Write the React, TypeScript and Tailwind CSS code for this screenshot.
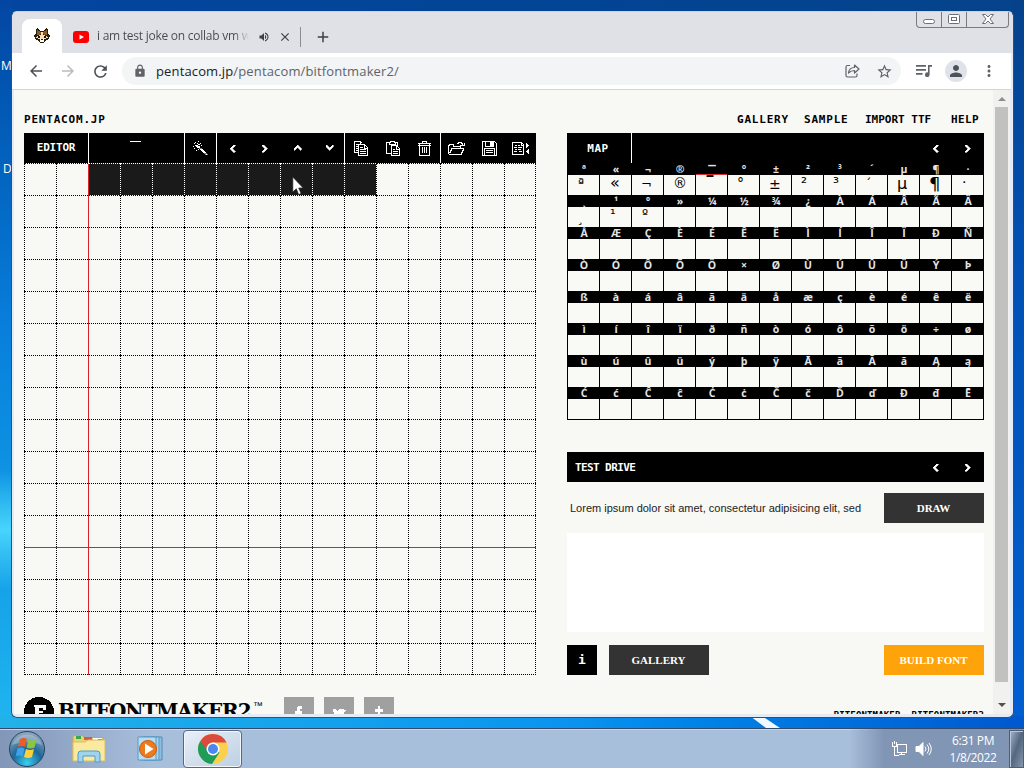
import type { ReactNode } from 'react'
import clsx from 'clsx'
import { MdArrowBack, MdArrowForward, MdRefresh, MdLock, MdStarBorder, MdPerson, MdMoreVert, MdVolumeUp, MdClose, MdAdd } from 'react-icons/md'

const LABELS = [
  'ª«¬®¯°±²³´µ¶·',
  '¸¹º»¼½¾¿ÀÁÂÃÄ',
  'ÅÆÇÈÉÊËÌÍÎÏÐÑ',
  'ÒÓÔÕÖ×ØÙÚÛÜÝÞ',
  'ßàáâãäåæçèéêë',
  'ìíîïðñòóôõö÷ø',
  'ùúûüýþÿĀāĂăĄą',
  'ĆćĈĉĊċČčĎďĐđĒ',
]

// Glyphs drawn so far, keyed by "row-col". The nudge places each one in its cell.
const GLYPHS: Record<string, { ch: string; cls: string }> = {
  '0-0': { ch: 'ª', cls: 'text-[13px] left-[10px] -top-[2px]' },
  '0-1': { ch: '«', cls: 'text-[16px] left-[10px] -top-[2px]' },
  '0-2': { ch: '¬', cls: 'text-[13px] left-[9px] -top-px' },
  '0-3': { ch: '®', cls: 'text-[14px] left-[9px] -top-[2px]' },
  '0-4': { ch: '¯', cls: 'text-[24px] left-[8px] top-px' },
  '0-5': { ch: '°', cls: 'text-[14px] left-[9px] -top-[2px]' },
  '0-6': { ch: '±', cls: 'text-[14px] left-[9px] -top-px' },
  '0-7': { ch: '²', cls: 'text-[15px] left-[9px] -top-[2px]' },
  '0-8': { ch: '³', cls: 'text-[15px] left-[9px] -top-[2px]' },
  '0-9': { ch: '´', cls: 'text-[13px] left-[9px] -top-px' },
  '0-10': { ch: 'µ', cls: 'text-[16px] left-[9px] -top-[1px]' },
  '0-11': { ch: '¶', cls: 'text-[18px] left-[9px] -top-[1px]' },
  '0-12': { ch: '·', cls: 'text-[14px] left-[10px] -top-[3px]' },
  '1-0': { ch: '¸', cls: 'text-[13px] left-[9px] top-px' },
  '1-1': { ch: '¹', cls: 'text-[14px] left-[10px] -top-[3px]' },
  '1-2': { ch: 'º', cls: 'text-[13px] left-[10px] -top-[3px]' },
}

const PIXEL = "font-['DejaVu_Sans_Mono',monospace] font-bold whitespace-nowrap"

function Svg({ w, h, d, children, className }: { w: number; h: number; d?: string; children?: ReactNode; className?: string }) {
  return (
    <svg
      width={w}
      height={h}
      viewBox={`0 0 ${w} ${h}`}
      fill="none"
      stroke="currentColor"
      shapeRendering="crispEdges"
      className={clsx('shrink-0', className)}
    >
      {d && <path d={d} />}
      {children}
    </svg>
  )
}

const ARROWS = {
  left: 'M4 0h2v1h-1v1h-1v1h-1v1h1v1h1v1h1v1h-2v-1h-1v-1h-1v-1h-1v-1h1v-1h1v-1h1z',
  right: 'M0 0h2v1h1v1h1v1h1v1h-1v1h-1v1h-1v1h-2v-1h1v-1h1v-1h1v-1h-1v-1h-1v-1h-1z',
  up: 'M3 0h1v1h1v1h1v1h1v2h-1v-1h-1v-1h-1v-1h-1v1h-1v1h-1v1h-1v-2h1v-1h1v-1h1z',
  down: 'M0 0h1v1h1v1h1v1h1v-1h1v-1h1v-1h1v2h-1v1h-1v1h-1v1h-1v-1h-1v-1h-1v-1h-1z',
}

function Arrow({ dir, className }: { dir: keyof typeof ARROWS; className?: string }) {
  return (
    <svg
      width="7"
      height="7"
      viewBox="0 0 7 7"
      fill="currentColor"
      stroke="currentColor"
      strokeWidth=".6"
      shapeRendering="crispEdges"
      className={clsx('overflow-visible', className)}
    >
      <path d={ARROWS[dir]} />
    </svg>
  )
}

function Tool({ children, end }: { children: ReactNode; end?: boolean }) {
  return (
    <div className={clsx('flex h-[30px] w-8 shrink-0 items-center justify-center', end && 'border-r border-white')}>
      {children}
    </div>
  )
}

function EditorBar() {
  return (
    <div className="flex h-[30px] w-[512px] bg-black text-white">
      <div className={clsx(PIXEL, 'flex w-[65px] shrink-0 items-center justify-center border-r border-white pt-px text-[11px] tracking-[-0.2px]')}>
        EDITOR
      </div>
      <div className="flex w-24 shrink-0 justify-center border-r border-white pt-2">
        <div className="mr-0.5 h-px w-[11px] bg-white" />
      </div>
      <Tool end>
        <Svg w={15} h={15}>
          <path d="M7.5 7.5l5 5M6.5 7.5l5 5M8.5 7.5l5 5M12.5 13.5h2" shapeRendering="auto" strokeWidth="1" />
          <path d="M5 0.5h1M1 2.5h1M4 2.5h1M7 2.5h1M2 1.5h1M2 4.5h2M5 3.5h2M4 4.5h1M0 5.5h1M3 5.5h4M8 4.5h1M1 7.5h1M4 6.5h3M5 8.5h1M3 9.5h1" />
        </Svg>
      </Tool>
      <Tool><Arrow dir="left" className="mr-0.5" /></Tool>
      <Tool><Arrow dir="right" /></Tool>
      <Tool><Arrow dir="up" /></Tool>
      <Tool end><Arrow dir="down" className="ml-0.5" /></Tool>
      <Tool>
        <Svg w={15} h={15} d="M4.5 11.5h-4v-11h6l2 2M6 1v2M2 3.5h2M2 5.5h2M2 7.5h2M2 9.5h2M4.5 3.5h6l3 3v8h-9zM10.5 4v3h3M6 6.5h3M6 8.5h6M6 10.5h6M6 12.5h6" />
      </Tool>
      <Tool>
        <Svg w={15} h={15} d="M5.5 12.5h-5v-11h3M9 1.5h2.500v3M3.500 3.500v-2h1v-1h4v1h1v2zM5.500 4.500h5l3 3v7h-8zM10.500 5v3h3M7 8.500h2M7 10.500h5M7 12.500h5" />
      </Tool>
      <Tool end>
        <Svg w={13} h={15} d="M4.5 2v-1.5h4v1.5M0 2.5h13M0 4.5h13M1.5 3v11.5h10v-11.5M4.5 6v6M6.5 6v6M8.5 6v6" />
      </Tool>
      <Tool>
        <Svg w={17} h={15} className="mr-0.5" d="M0.5 13v-8.5h1v-1h4v2h7v2M1 13.5h12M1.5 12v-1h1v-2h1v-1.500h12v2h-1v2h-1v2M9 2.500h1v-1h3v1h1v2M12 4.500h4v-3" />
      </Tool>
      <Tool>
        <Svg w={15} h={15} d="M0.500 0.500h12l2 2v12h-14zM3.500 1v4h8v-4M2.500 14v-6.500h10v6.500">
          <path d="M8 1h3v4h-3z" fill="currentColor" stroke="none" />
          <path d="M4 9.500h7M4 11.500h7" />
        </Svg>
      </Tool>
      <Tool>
        <Svg w={18} h={13} d="M0.500 0.500h9l2 2v10h-11zM9.500 1v2h2M3 3.500h2M6 3.500h2M2 5.500h3M6 5.500h4M3 7.500h2M6 7.500h3M2 9.500h3M7 9.500h3">
          <path d="M14 1h1v1h1v1h1v1h-1v1h-1v1h-1zM17 7v5h-1v-1h-1v-1h-1v-1h1v-1h1v-1z" fill="currentColor" stroke="none" />
        </Svg>
      </Tool>
    </div>
  )
}

function PixelGrid() {
  return (
    <div className="relative grid h-[512px] w-[512px] grid-cols-[repeat(16,32px)] grid-rows-[repeat(16,32px)] border-r border-b border-dotted border-black">
      {Array.from({ length: 256 }, (_, i) => {
        const row = Math.floor(i / 16)
        const col = i % 16
        const on = row === 0 && col >= 2 && col <= 10
        return (
          <div
            key={i}
            className={clsx('border-t border-l border-dotted', on ? 'border-white bg-[#1a1a1a]' : 'border-black')}
          />
        )
      })}
      {/* left bearing and baseline guides */}
      <div className="absolute top-px left-16 z-10 h-[511px] w-px bg-[#d82428]" />
      <div className="absolute top-[384px] left-0 z-10 h-px w-[512px] bg-[#dc2030]" />
    </div>
  )
}

function GlyphMap() {
  return (
    <div className="w-[417px] bg-black pb-px">
      <div className="flex h-[30px] text-white">
        <div className={clsx(PIXEL, 'flex w-[65px] items-center justify-center border-r border-white pt-0.5 pr-0.5 text-[11px] tracking-[0.5px]')}>MAP</div>
        <div className="ml-auto flex">
          <Tool><Arrow dir="left" className="mr-0.5" /></Tool>
          <Tool><Arrow dir="right" /></Tool>
        </div>
      </div>
      {LABELS.map((row, r) => (
        <div key={r} className="flex h-8 gap-px pl-px">
          {Array.from(row).map((ch, c) => {
            const g = GLYPHS[`${r}-${c}`]
            return (
              <div key={c} className="flex w-[31px] flex-col">
                <div
                  className={clsx(
                    "flex h-3 items-center justify-center pl-px font-['Open_Sans','Noto_Sans',sans-serif] leading-3 font-bold text-[#e4e4e4]",
                    ch === '¯' ? 'pt-1 text-[15px]' : 'text-[10.5px]',
                  )}
                >
                  {ch}
                </div>
                <div className="relative h-5 bg-[#f9f9f5]">
                  {r === 0 && c === 4 && <div className="absolute -top-px left-0 h-px w-full bg-[#d83030]" />}
                  {g && (
                    <span className={clsx("absolute font-['DejaVu_Sans','Liberation_Sans',sans-serif] leading-5 text-black", g.cls)}>{g.ch}</span>
                  )}
                </div>
              </div>
            )
          })}
        </div>
      ))}
    </div>
  )
}

const SERIF_BTN = "flex h-[30px] w-[100px] items-center justify-center pr-px font-['Liberation_Serif',serif] text-[11px] font-bold text-white"

function TestDrive() {
  return (
    <div className="mt-8 w-[417px]">
      <div className="flex h-[30px] items-center bg-black pl-2 text-white">
        <span className={clsx(PIXEL, 'pt-0.5 text-[11px] tracking-[-0.6px]')}>TEST DRIVE</span>
        <div className="ml-auto flex">
          <Tool><Arrow dir="left" className="mr-0.5" /></Tool>
          <Tool><Arrow dir="right" /></Tool>
        </div>
      </div>
      <div className="mt-[11px] flex items-center">
        <span className="pl-[3px] font-['Liberation_Sans',sans-serif] text-[11px] whitespace-nowrap text-[#222]">
          Lorem ipsum dolor sit amet, consectetur adipisicing elit, sed
        </span>
        <div className={clsx(SERIF_BTN, 'ml-auto bg-[#333]')}>DRAW</div>
      </div>
      <div className="mt-[10px] h-[99px] bg-white" />
      <div className="mt-[13px] flex">
        <div className={clsx(PIXEL, 'flex size-[30px] items-center justify-center bg-black text-[13px] text-white')}>i</div>
        <div className={clsx(SERIF_BTN, 'ml-3 bg-[#333]')}>GALLERY</div>
        <div className={clsx(SERIF_BTN, 'ml-auto bg-[#fea30a]')}>BUILD FONT</div>
      </div>
    </div>
  )
}

function Social({ children }: { children: ReactNode }) {
  return (
    <div className="flex size-[30px] justify-center bg-[#a0a0a0] pt-2 text-white">
      {children}
    </div>
  )
}

function Footer() {
  return (
    <div className="mt-[22px] flex">
      <svg width="30" height="30" viewBox="0 0 30 30" shapeRendering="crispEdges">
        <circle cx="15" cy="15" r="15" />
        <path d="M10 8h12v5h-3v-2h-4v3h4v2h-4v6h-5v-2h1v-10h-1z" fill="#f8f8f4" />
      </svg>
      <div className="mt-px ml-1 w-[192px] font-['DejaVu_Serif',serif] text-[20px] leading-[26px] font-bold tracking-[-1.1px] whitespace-nowrap">
        BITFONTMAKER2
      </div>
      <span className="mt-1 ml-[3px] w-[10px] font-['Liberation_Sans',sans-serif] text-[10px] leading-[9px]">™</span>
      <div className="ml-[21px] flex gap-[10px]">
        <Social>
          <svg width="10" height="16" viewBox="0 0 10 16" fill="currentColor" shapeRendering="crispEdges"><path d="M4 1h4v3h-2v2h2v3h-2v6h-3v-6h-2v-3h2v-4z" /></svg>
        </Social>
        <Social>
          <svg width="14" height="14" viewBox="0 0 14 14" fill="currentColor" shapeRendering="crispEdges"><path d="M1 4h2l3 3v-2l2-1h3l1 1h2l-2 2v3l-3 3h-6l-2-2h3l-2-2v-1l-1-2z" /></svg>
        </Social>
        <Social>
          <svg width="10" height="16" viewBox="0 0 10 16" fill="currentColor" shapeRendering="crispEdges"><path d="M4 1h2v3h3v3h-3v5h3v3h-5v-8h-3v-3h3z" /></svg>
        </Social>
      </div>
      <div className={clsx(PIXEL, 'mt-[12px] ml-auto text-[9px] leading-3 tracking-[0.15px]')}>BITFONTMAKER, BITFONTMAKER2</div>
    </div>
  )
}

function Site() {
  return (
    <div className="h-[624px] w-[979px] overflow-hidden bg-[#f8f8f4] pr-[9px] pl-[10px] text-black">
      <div className={clsx(PIXEL, 'flex h-[43px] items-end pb-[6px] text-[11px] leading-[14px] tracking-[0.8px]')}>
        <span>PENTACOM.JP</span>
        <div className="ml-auto flex pr-[5px]">
          <span className="w-[67px]">GALLERY</span>
          <span className="w-[61px]">SAMPLE</span>
          <span className="w-[86px] tracking-[0px]">IMPORT TTF</span>
          <span className="w-7 tracking-[0.4px]">HELP</span>
        </div>
      </div>
      <div className="flex gap-[31px]">
        <div>
          <EditorBar />
          <PixelGrid />
        </div>
        <div>
          <GlyphMap />
          <TestDrive />
        </div>
      </div>
      <Footer />
    </div>
  )
}

function TitleBar() {
  return (
    <div className="flex h-[41px] bg-[#dfe1e6] pl-[10px]">
      <div className="mt-[7px] flex h-[34px] w-10 items-center justify-center rounded-t-lg bg-white">
        <svg width="16" height="16" viewBox="0 0 16 16" shapeRendering="crispEdges">
          <path d="M3 0h1v1h1v1h1v1h4v-1h1v-1h1v-1h1v1h1v5h1v1h1v2h-1v2h-1v1h-2v1h-1v1h-1v1h-4v-1h-1v-1h-1v-1h-2v-1h-1v-2h-1v-2h1v-1h1v-5h1z" fill="#2a1c0c" />
          <path d="M3 2h1v1h2v1h1v2h-1v1h-3zM13 2h-1v1h-2v1h-1v2h1v1h3z" fill="#8a5c2c" />
          <path d="M7 4h2v3h2v1h2v1h1v1h-2v1h-2v1h-4v-1h-2v-1h-2v-1h1v-1h2v-1h2z" fill="#f4e2b4" />
          <path d="M4 8h2v2h-2zM10 8h2v2h-2z" fill="#181008" />
          <path d="M6 11h4v3h-4z" fill="#fff" />
          <path d="M7 11h2v1h-2z" fill="#222" />
        </svg>
      </div>
      <div className="flex h-[34px] items-center pt-4 pl-[11px]">
        <svg width="16" height="12" viewBox="0 0 16 12">
          <rect width="16" height="12" rx="3" fill="#f00" />
          <path d="M6.500 3.500l4.500 2.500l-4.500 2.500z" fill="#fff" />
        </svg>
        <div className="mb-0.5 ml-2 w-[152px] bg-linear-to-r from-[#45494d] from-90% to-[#dfe1e6] bg-clip-text font-['Open_Sans',sans-serif] text-[12px] tracking-[-0.25px] whitespace-nowrap text-transparent">
          i am test joke on collab vm w
        </div>
        <MdVolumeUp className="ml-[9px] size-3 text-[#3c4043]" />
        <MdClose className="ml-2 size-[14px] text-[#3c4043]" />
        <div className="ml-2 h-5 w-px bg-[#8a8d92]" />
        <MdAdd className="ml-[13px] size-[18px] text-[#3c4043]" />
      </div>
      <div className="mr-1 ml-auto flex h-4 w-[93px] rounded-b border border-t-0 border-[#777b84] text-[#6a6e78]">
        <div className="flex w-[25px] items-center justify-center border-r border-[#777b84] pt-1">
          <div className="h-[5px] w-3 rounded-sm border border-[#6a6e78] bg-white" />
        </div>
        <div className="flex w-[25px] items-center justify-center border-r border-[#777b84] pb-0.5">
          <svg width="12" height="10" viewBox="0 0 12 10" fill="none" stroke="currentColor"><rect x=".5" y=".5" width="11" height="9" rx="1" fill="#fff" /><rect x="3.500" y="3.500" width="5" height="3" /></svg>
        </div>
        <div className="flex flex-1 items-center justify-center pb-0.5">
          <svg width="12" height="10" viewBox="0 0 12 10" fill="#fff" stroke="currentColor"><path d="M.5.5h3l2.500 2.500l2.500-2.500h3l-3.500 4.500l3.500 4.500h-3l-2.500-2.500l-2.500 2.500h-3l3.500-4.500z" /></svg>
        </div>
      </div>
    </div>
  )
}

function Toolbar() {
  return (
    <div className="flex h-[37px] items-center border-b border-[#d5d6d9] bg-white text-[#5f6368]">
      <MdArrowBack className="ml-[15px] size-[18px] text-[#4c5054]" />
      <MdArrowForward className="ml-[14px] size-[18px] text-[#b9bbbe]" />
      <MdRefresh className="ml-[14px] size-[19px] text-[#4c5054]" />
      <div className="ml-3 flex h-7 w-[779px] items-center rounded-full bg-[#f2f4f5]">
        <MdLock className="ml-[11px] size-[14px]" />
        <span className="mt-px ml-[9px] font-['Open_Sans',sans-serif] text-[13px] tracking-[0.14px] whitespace-nowrap">
          <span className="text-[#202124]">pentacom.jp</span>/pentacom/bitfontmaker2/
        </span>
        <svg className="mr-[16px] ml-auto" width="15" height="14" viewBox="0 0 15 14" fill="none" stroke="currentColor" strokeWidth="1.200">
          <path d="M5 1.500h-2.500q-1.500 0-1.500 1.500v8.500q0 1.500 1.500 1.500h8q1.500 0 1.500-1.500v-2" />
          <path d="M3.500 9q.5-5.500 6-5.500v-2.500l4.500 4l-4.500 4v-2.500q-3.500 0-6 2.500z" strokeLinejoin="round" />
        </svg>
        <MdStarBorder className="mr-[8px] size-[17px]" />
      </div>
      <svg className="ml-[15px]" width="17" height="14" viewBox="0 0 17 14" fill="currentColor">
        <path d="M0 1h10v1.700h-10zM0 5h10v1.700h-10zM0 9h6.500v1.700h-6.500zM12 1h4v1.700h-2.400v8a2.300 2.300 0 1 1-1.600-2.200z" />
      </svg>
      <div className="ml-[12px] flex size-[22px] items-center justify-center rounded-full bg-[#dfe2e8]">
        <MdPerson className="size-[18px] text-[#4c515a]" />
      </div>
      <MdMoreVert className="ml-[13px] size-[18px]" />
    </div>
  )
}

function BrowserWindow() {
  return (
    <div className="absolute top-[11px] left-[11px] h-[707px] w-[1003px] overflow-hidden rounded-md border border-[#34506e] border-t-[#c8d4e4] bg-[#e6eaf4]">
      <TitleBar />
      <div className="mr-[2px]">
        <Toolbar />
      </div>
      <div className="ml-[2px] flex">
        <Site />
        <div className="flex h-[624px] w-[17px] flex-col items-center bg-[#f1f1f0]">
          <div className="mt-[7px] size-0 border-x-4 border-b-4 border-transparent border-b-[#8e8e8e]" />
          <div className="mt-[6px] mr-[1px] h-[575px] w-[13px] bg-[#c1c1c0]" />
          <div className="mt-[21px] size-0 border-x-4 border-t-4 border-transparent border-t-[#505050]" />
        </div>
      </div>
    </div>
  )
}

function Taskbar() {
  return (
    <div className="flex h-10 items-center border-t border-[#324b6c] bg-linear-to-r from-[#8296b8] from-0% via-[#a8bfdc] via-15% to-[#a8bfdc] shadow-[inset_0_1px_0_#c6d6e8]">
      <svg className="ml-[8px]" width="38" height="38" viewBox="0 0 38 38">
        <defs>
          <radialGradient id="orb" cx=".5" cy=".9" r=".85">
            <stop offset="0" stopColor="#38d0f0" />
            <stop offset=".5" stopColor="#1c6798" />
            <stop offset="1" stopColor="#8ba6bd" />
          </radialGradient>
        </defs>
        <circle cx="19" cy="19" r="17.500" fill="url(#orb)" stroke="#24425e" />
        <path d="M4 15a15.500 14 0 0 1 30 0q-15-6-30 0" fill="#fff" opacity=".25" />
        <path d="M12 9q4-2 7 0l-2 8q-4-2-7 0z" fill="#ef5a28" />
        <path d="M20.500 9.500q4 2 8 0l-2 8q-4 2-8 0z" fill="#8cc63e" />
        <path d="M9.500 18.500q4-2 7 0l-2 8q-4-2-7 0z" fill="#3da1ec" />
        <path d="M18 19q4 2 8 0l-2 8q-4 2-8 0z" fill="#fdd03b" />
      </svg>
      <svg className="ml-[26px]" width="34" height="30" viewBox="0 0 34 30">
        <path d="M1 3q0-1.500 1.500-1.500h8l1.500 2h19v23h-30z" fill="#ecd271" stroke="#c9a84a" />
        <path d="M4 2h5v3h-5z" fill="#36a852" />
        <path d="M12 3h8v3h-8z" fill="#d95b3c" />
        <path d="M21 4h9v3h-9z" fill="#fff" />
        <path d="M26 5h4v2h-4z" fill="#3f87c8" />
        <path d="M1 8h12l3-2h17v21h-32z" fill="#fae99f" stroke="#d8be66" />
        <path d="M6 28v-8q0-3 3-3h16q3 0 3 3v8h-5v-6h-12v6z" fill="#9fd4f0" stroke="#4c9cc8" />
      </svg>
      <svg className="ml-[31px]" width="30" height="28" viewBox="0 0 30 28">
        <path d="M7 2h18v23h-18z" fill="#92bede" stroke="#4b8db8" />
        <path d="M4 2h18v23h-18z" fill="#a9d2ea" stroke="#5899c4" />
        <path d="M1 2h18v23h-18z" fill="#b9dcf0" stroke="#5899c4" />
        <circle cx="11" cy="14" r="8.500" fill="#ee7a1e" stroke="#c85c10" />
        <path d="M8 8.500l8.500 5.500l-8.500 5.500z" fill="#fff" />
      </svg>
      <div className="ml-[16px] flex h-[38px] w-[59px] items-center justify-center rounded-sm border border-[#53698a] bg-linear-to-br from-[#e9eff6] to-[#bccfe3] shadow-[inset_0_0_0_1px_#f2f7fb]">
        <svg width="30" height="30" viewBox="0 0 30 30">
          <circle cx="15" cy="15" r="15" fill="#fdd04b" />
          <path d="M15 15L2 7.500A15 15 0 0 0 14 30l7.500-11.500z" fill="#1e9c58" />
          <path d="M2 7.500A15 15 0 0 1 28.500 8.500H15a6.500 6.500 0 0 0-6.500 6.500z" fill="#dc4a3d" />
          <circle cx="15" cy="15" r="6.500" fill="#fff" />
          <circle cx="15" cy="15" r="5" fill="#4a88ee" />
        </svg>
      </div>
      <div className="ml-auto flex h-[39px] w-[175px] items-center bg-linear-to-r from-transparent to-[#8096b4] to-20%">
        <svg className="ml-[42px]" width="17" height="16" viewBox="0 0 17 16" fill="none" stroke="#fff" shapeRendering="crispEdges">
          <path d="M1.500 1v4.500h4v-4.500M3.500 0v3M3.500 6v8.500h4M6.500 3.500h9v8h-9zM8 13.500h6M10 12v2" />
        </svg>
        <svg className="ml-[7px]" width="17" height="16" viewBox="0 0 17 16" fill="none" stroke="#fff">
          <path d="M1 5.500h3l4-4v13l-4-4h-3z" fill="#fff" />
          <path d="M10 5.500q2 2.500 0 5M12 3.500q3.500 4.500 0 9M14 2q4.500 6 0 12" />
        </svg>
        <div className="ml-[17px] w-12 text-center font-['Open_Sans',sans-serif] text-[12px] leading-[17px] tracking-[-0.4px] whitespace-nowrap text-white">
          <div>6:31 PM</div>
          <div>1/8/2022</div>
        </div>
        <div className="ml-auto h-[38px] w-[15px] border border-[#4b5f7c] bg-linear-to-br from-[#a6b5c9] via-[#53677f] to-[#8597ac] shadow-[inset_1px_1px_0_#b8c6d6]" />
      </div>
    </div>
  )
}

export default function App() {
  return (
    <div className="relative flex h-[768px] w-[1024px] flex-col overflow-hidden bg-[#0659bd]">
      {/* wallpaper */}
      <div className="relative h-[728px] overflow-hidden bg-linear-to-r from-[#0445a0] via-[#024596] to-[#05438b]">
        <div className="absolute inset-y-0 left-0 w-3 bg-linear-to-b from-[#0346a2] via-[#087fdb] via-45% to-[#20b5ef]">
          <div className="mt-[470px] h-[120px] bg-linear-to-b from-transparent via-[#48d4fc] to-transparent" />
        </div>
        <div className="absolute inset-y-0 right-0 w-3 bg-linear-to-b from-[#06418a] via-[#0050b4] via-35% to-[#005fd2]" />
        <div className="absolute bottom-0 left-0 h-3 w-full bg-linear-to-r from-[#22b2e8] via-[#0a94f0] via-55% to-[#0058ce]" />
        <svg className="absolute bottom-0 left-[745px]" width="40" height="12" viewBox="0 0 40 12">
          <path d="M5 0h12l18 12h-14z" fill="#eefaff" />
        </svg>
        <div className="absolute top-[59px] left-px font-['Open_Sans',sans-serif] text-[12px] leading-[14px] text-white">M</div>
        <div className="absolute top-[162px] left-[3px] font-['Open_Sans',sans-serif] text-[12px] leading-[14px] text-white">D</div>
        <BrowserWindow />
      </div>
      <Taskbar />
      {/* pointer */}
      <svg className="absolute top-[176px] left-[292px]" width="12" height="20" viewBox="0 0 12 20">
        <path d="M.8 1v15l3.500-3.200l2.300 5.700l2.500-1l-2.400-5.500h4.500z" fill="#fff" stroke="#222" strokeWidth=".7" />
      </svg>
    </div>
  )
}
